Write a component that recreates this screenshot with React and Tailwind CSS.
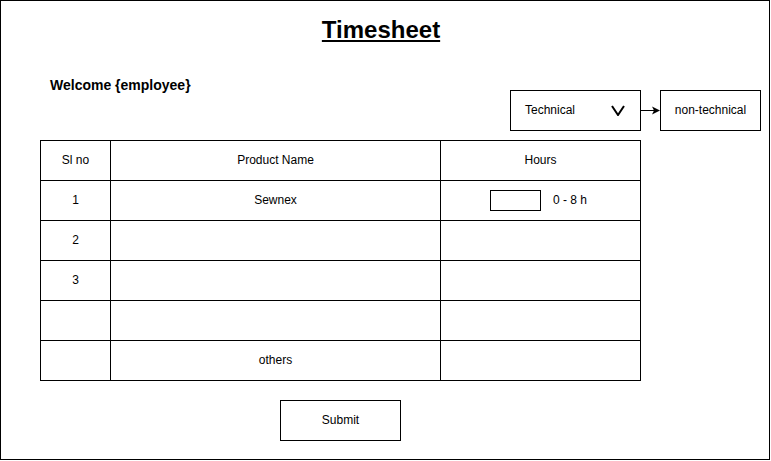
import React from 'react';

const rows = [
  { no: '1', name: 'Sewnex', hours: true },
  { no: '2', name: '' },
  { no: '3', name: '' },
  { no: '', name: '' },
  { no: '', name: 'others' },
];

const cell = 'h-[40px] border-r border-b border-black flex items-center pb-[2px]';

const App = () => {
  return (
    <div className="w-[771px] h-[461px] bg-white text-black" style={{ fontFamily: '"Liberation Sans", Arial, sans-serif' }}>
      <div className="w-[770px] h-[460px] border border-black flex flex-col">
        {/* title */}
        <div className="mt-[15px] flex justify-center pr-[8px]">
          <h1 className="text-[24px] leading-[28px] font-bold underline">Timesheet</h1>
        </div>

        {/* welcome + category */}
        <div className="mt-[33px] flex items-start">
          <div className="ml-[49px] text-[14px] leading-[16px] font-bold">Welcome {'{employee}'}</div>
          <div className="ml-auto mr-[8px] mt-[13px] flex items-center">
            <div className="w-[131px] h-[41px] border border-black flex items-center pl-[14px] pr-[15px] pb-[2px] justify-between text-[12px]">
              <span>Technical</span>
              <svg width="14" height="11" viewBox="0 0 14 11" className="mt-[2px]">
                <polyline points="1,1 7,10 13,1" fill="none" stroke="black" strokeWidth="2" />
              </svg>
            </div>
            <svg width="19" height="41" viewBox="0 0 19 41">
              <line x1="0" y1="20.5" x2="13" y2="20.5" stroke="black" strokeWidth="1" />
              <polygon points="11,16.5 19,20.5 11,24.5 13,20.5" fill="black" />
            </svg>
            <div className="w-[101px] h-[41px] border border-black flex items-center justify-center pb-[2px] text-[12px]">
              non-technical
            </div>
          </div>
        </div>

        {/* table */}
        <div className="mt-[9px] ml-[39px] w-[601px] border-l border-t border-black grid grid-cols-[70px_330px_200px] text-[12px]">
          <div className={`${cell} justify-center`}>Sl no</div>
          <div className={`${cell} justify-center`}>Product Name</div>
          <div className={`${cell} justify-center`}>Hours</div>
          {rows.map((r, i) => (
            <React.Fragment key={i}>
              <div className={`${cell} justify-center`}>{r.no}</div>
              <div className={`${cell} justify-center`}>{r.name}</div>
              <div className="h-[40px] border-r border-b border-black flex items-center pl-[49px]">
                {r.hours && (
                  <>
                    <div className="w-[51px] h-[21px] border border-black" />
                    <span className="ml-[12px] mb-[2px]">0 - 8 h</span>
                  </>
                )}
              </div>
            </React.Fragment>
          ))}
        </div>

        {/* submit */}
        <div className="mt-[19px] ml-[279px] w-[121px] h-[41px] border border-black flex items-center justify-center pb-[2px] text-[12px]">
          Submit
        </div>
      </div>
    </div>
  );
};

export default App;
